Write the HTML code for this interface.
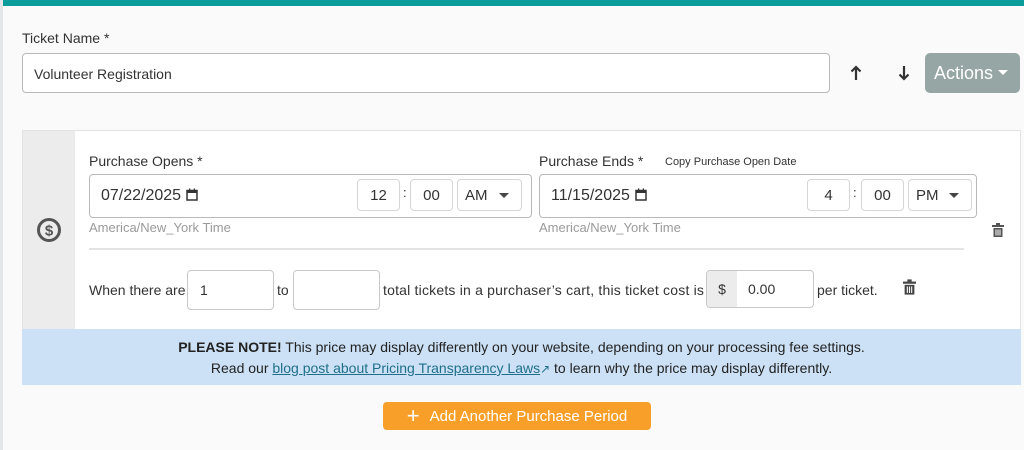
<!DOCTYPE html>
<html><head><style>
*{box-sizing:border-box;margin:0;padding:0}
body{width:1024px;height:450px;background:#fafafa;font-family:"Liberation Sans",sans-serif;color:#333;position:relative;overflow:hidden}
.a{position:absolute}
.top{left:0;top:0;width:1024px;height:6px;background:#0b9c9c}
.lb{left:0;top:0;width:3px;height:450px;background:#e4e6e8}
.box{border:1px solid #b9b9b9;border-radius:4px;background:#fff}
.sm{border:1px solid #d6d6d6;border-radius:4px;background:#fff;font-size:15px;display:flex;align-items:center;justify-content:center;color:#333}
.tz{font-size:13px;color:#9a9a9a}
.lab{font-size:14px;color:#333}
.caret{display:inline-block;width:0;height:0;border-left:5px solid transparent;border-right:5px solid transparent;border-top:5px solid #444}
.cal{display:inline-block;vertical-align:-1px;margin-left:5px}
</style></head><body>
<div class="a top"></div><div class="a lb"></div>
<div class="a lab" style="left:22px;top:30px">Ticket Name *</div>
<div class="a box" style="left:22px;top:53px;width:808px;height:40px;font-size:14px;padding:12px 11px">Volunteer Registration</div>
<svg class="a" style="left:850px;top:65px" width="12" height="16" viewBox="0 0 12 16"><path d="M6 2V15M1.5 6.5L6 2l4.5 4.5" fill="none" stroke="#333" stroke-width="2.2"/></svg>
<svg class="a" style="left:898px;top:65px" width="12" height="16" viewBox="0 0 12 16"><path d="M6 1V14M1.5 9.5L6 14l4.5-4.5" fill="none" stroke="#333" stroke-width="2.2"/></svg>
<div class="a" style="left:925px;top:53px;width:95px;height:40px;background:#96a6a4;border-radius:5px;color:#fff;font-size:18px;padding:10px 0 0 9px">Actions <span class="caret" style="border-top-color:#fff;vertical-align:4px"></span></div>

<div class="a" style="left:22px;top:130px;width:999px;height:255px;border:1px solid #e3e3e3;background:#fff"></div>
<div class="a" style="left:23px;top:131px;width:52px;height:198px;background:#ececec"></div>
<svg class="a" style="left:36px;top:217px" width="26" height="26" viewBox="0 0 26 26"><circle cx="13" cy="13" r="10.5" fill="none" stroke="#555" stroke-width="3"/><text x="13" y="18.5" text-anchor="middle" font-size="15" font-weight="bold" fill="#555" font-family="Liberation Sans">$</text></svg>

<div class="a lab" style="left:89px;top:153px">Purchase Opens *</div>
<div class="a box" style="left:89px;top:174px;width:443px;height:44px"></div>
<div class="a" style="left:101px;top:187px;font-size:16px">07/22/2025<svg class="cal" width="12" height="13" viewBox="0 0 12 13"><rect x="1" y="2.5" width="10" height="9.5" fill="none" stroke="#333" stroke-width="1.5"/><rect x="1" y="2.5" width="10" height="2.5" fill="#333"/><rect x="3" y="0.5" width="1.3" height="2.5" fill="#333"/><rect x="7.7" y="0.5" width="1.3" height="2.5" fill="#333"/></svg></div>
<div class="a sm" style="left:357px;top:179px;width:43px;height:32px">12</div>
<div class="a" style="left:403px;top:185px;font-size:13px">:</div>
<div class="a sm" style="left:410px;top:179px;width:43px;height:32px">00</div>
<div class="a sm" style="left:457px;top:179px;width:65px;height:32px;justify-content:space-between;padding:0 12px 0 7px">AM <span class="caret"></span></div>
<div class="a tz" style="left:89px;top:220px">America/New_York Time</div>

<div class="a lab" style="left:539px;top:153px">Purchase Ends *</div>
<div class="a" style="left:665px;top:156px;font-size:11px;color:#333">Copy Purchase Open Date</div>
<div class="a box" style="left:539px;top:174px;width:438px;height:44px"></div>
<div class="a" style="left:551px;top:187px;font-size:16px">11/15/2025<svg class="cal" width="12" height="13" viewBox="0 0 12 13"><rect x="1" y="2.5" width="10" height="9.5" fill="none" stroke="#333" stroke-width="1.5"/><rect x="1" y="2.5" width="10" height="2.5" fill="#333"/><rect x="3" y="0.5" width="1.3" height="2.5" fill="#333"/><rect x="7.7" y="0.5" width="1.3" height="2.5" fill="#333"/></svg></div>
<div class="a sm" style="left:807px;top:179px;width:43px;height:32px">4</div>
<div class="a" style="left:853px;top:185px;font-size:13px">:</div>
<div class="a sm" style="left:861px;top:179px;width:43px;height:32px">00</div>
<div class="a sm" style="left:908px;top:179px;width:64px;height:32px;justify-content:space-between;padding:0 12px 0 7px">PM <span class="caret"></span></div>
<div class="a tz" style="left:539px;top:220px">America/New_York Time</div>
<svg class="a" style="left:992px;top:223px" width="12" height="14" viewBox="0 0 12 14"><rect x="0" y="2" width="12" height="2" fill="#555"/><rect x="4" y="0" width="4" height="2" fill="#555"/><rect x="1.5" y="5" width="9" height="9" fill="#555"/><rect x="3.5" y="6.5" width="1" height="6" fill="#fff"/><rect x="5.5" y="6.5" width="1" height="6" fill="#fff"/><rect x="7.5" y="6.5" width="1" height="6" fill="#fff"/></svg>
<div class="a" style="left:89px;top:248px;width:875px;height:2px;background:#e3e3e3"></div>

<div class="a" style="left:89px;top:282px;font-size:14px">When there are</div>
<div class="a sm" style="left:187px;top:270px;width:87px;height:40px;justify-content:flex-start;padding-left:12px;font-size:14px;border-color:#c8c8c8">1</div>
<div class="a" style="left:277px;top:282px;font-size:14px">to</div>
<div class="a sm" style="left:293px;top:270px;width:87px;height:40px;border-color:#c8c8c8"></div>
<div class="a" style="left:383px;top:282px;font-size:14px;letter-spacing:0.2px">total tickets in a purchaser’s cart, this ticket cost is</div>
<div class="a sm" style="left:706px;top:270px;width:108px;height:38px;justify-content:flex-start;border-color:#c8c8c8;font-size:14px;overflow:hidden"><div style="width:30px;height:100%;background:#ececec;display:flex;align-items:center;justify-content:center">$</div><div style="padding-left:11px">0.00</div></div>
<div class="a" style="left:817px;top:282px;font-size:14px">per ticket.</div>
<svg class="a" style="left:903px;top:279px" width="13" height="16" viewBox="0 0 12 14"><rect x="0" y="2" width="12" height="2" fill="#444"/><rect x="4" y="0" width="4" height="2" fill="#444"/><rect x="1.5" y="5" width="9" height="9" fill="#444"/><rect x="3.5" y="6.5" width="1" height="6" fill="#fff"/><rect x="5.5" y="6.5" width="1" height="6" fill="#fff"/><rect x="7.5" y="6.5" width="1" height="6" fill="#fff"/></svg>

<div class="a" style="left:22px;top:329px;width:999px;height:56px;background:#cce1f5;font-size:14px;text-align:center;color:#222;padding-top:8px;line-height:21px">
<div><b>PLEASE NOTE!</b> This price may display differently on your website, depending on your processing fee settings.</div>
<div>Read our <span style="color:#1f6f8b;text-decoration:underline">blog post about Pricing Transparency Laws</span><span style="color:#1f6f8b;font-size:12px">&#8599;</span> to learn why the price may display differently.</div>
</div>

<div class="a" style="left:383px;top:402px;width:268px;height:28px;background:#f89f2a;border-radius:4px;color:#fff;font-size:15px;display:flex;align-items:center;justify-content:center"><span style="font-size:22px;margin-right:10px;line-height:1">+</span>Add Another Purchase Period</div>
</body></html>
